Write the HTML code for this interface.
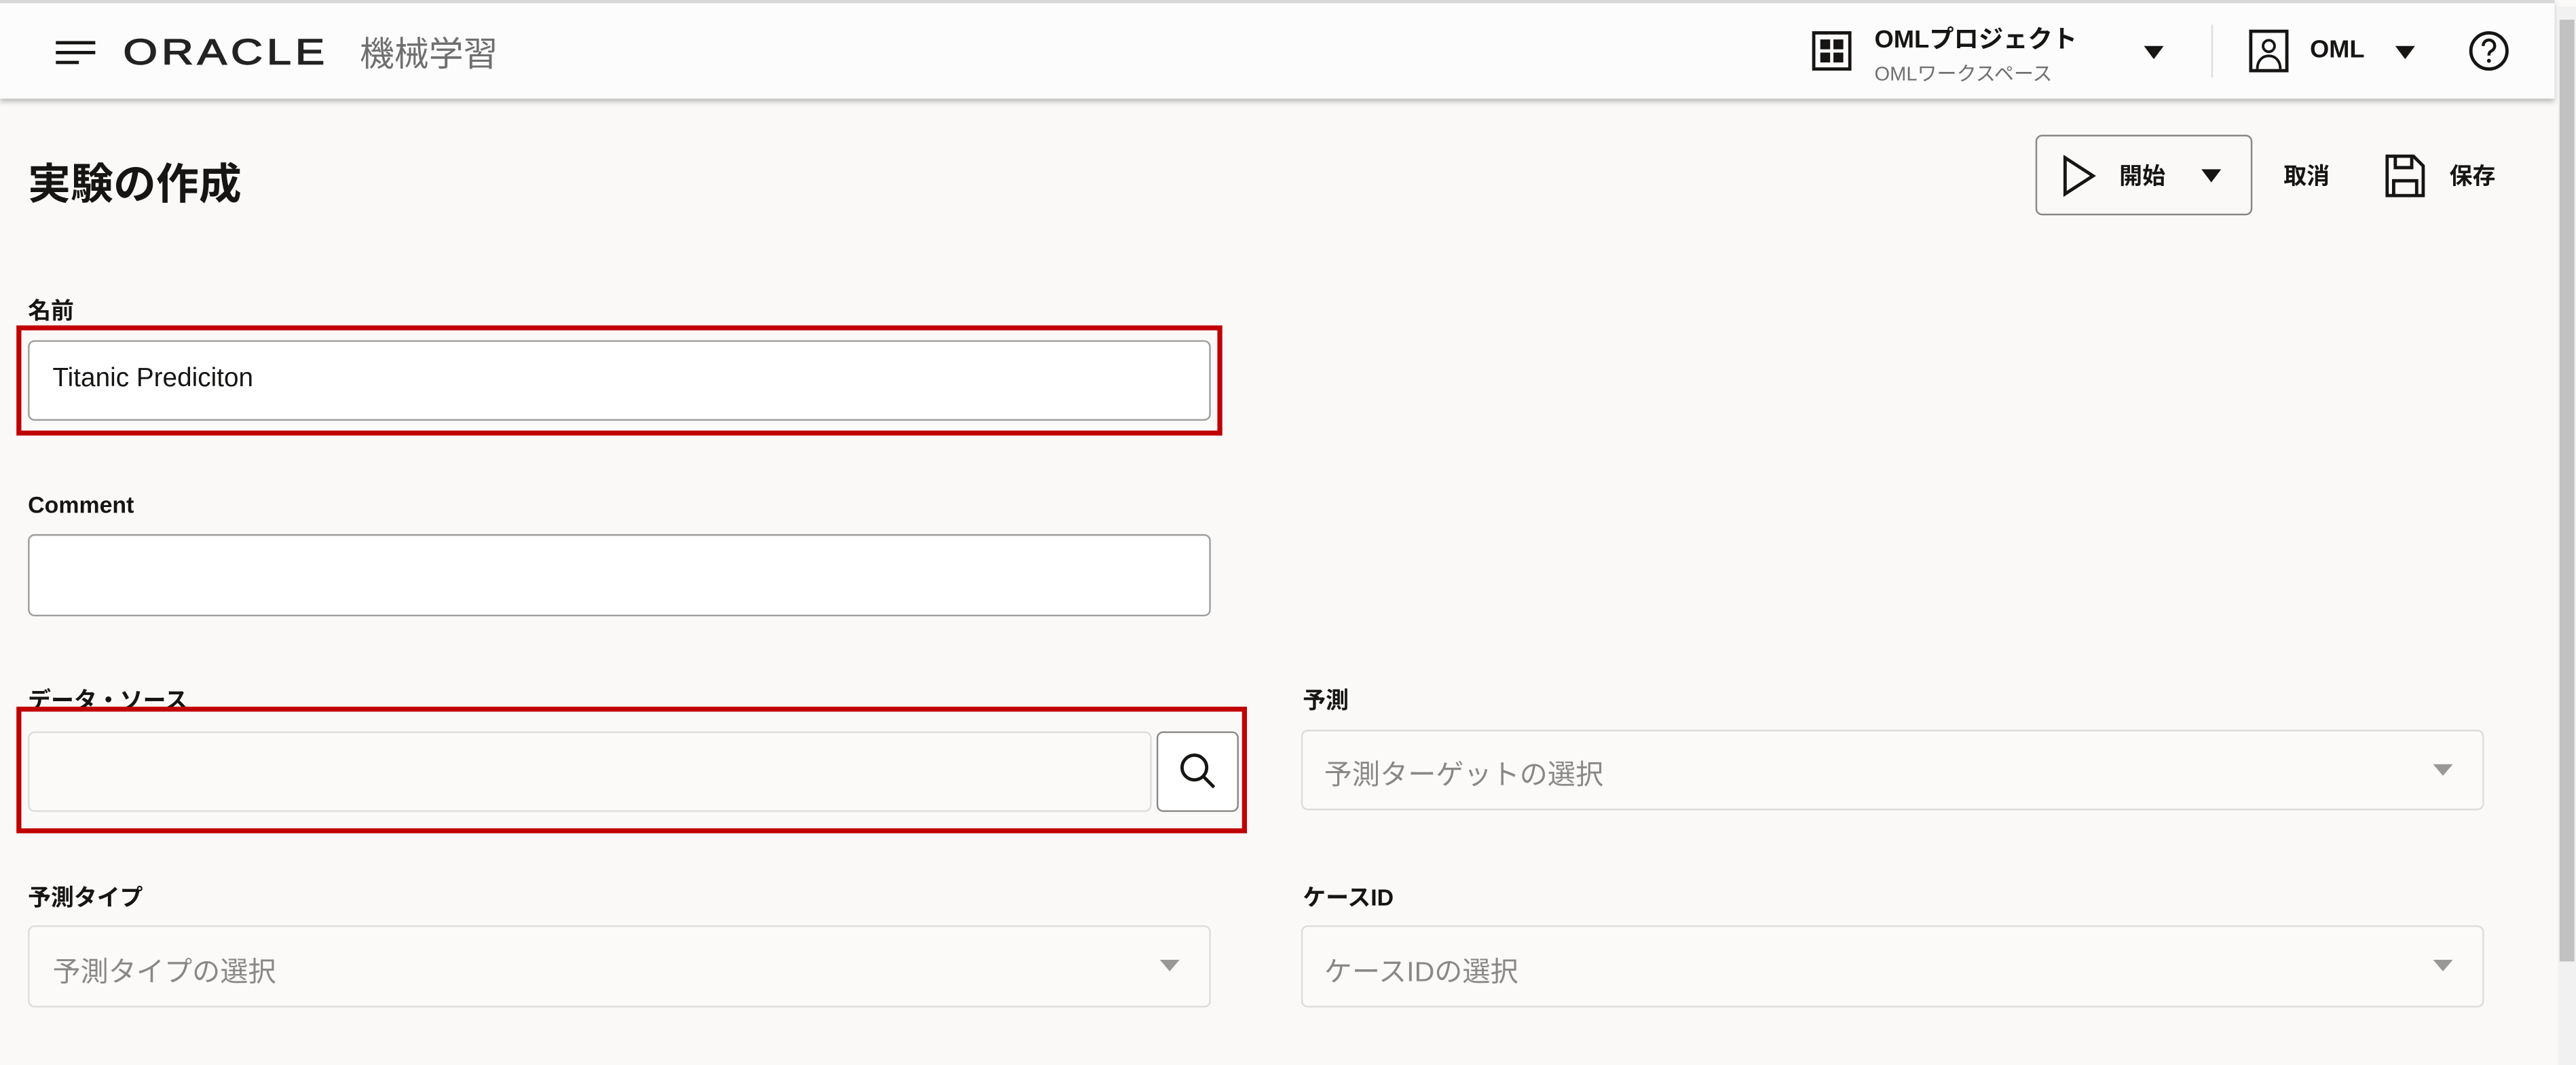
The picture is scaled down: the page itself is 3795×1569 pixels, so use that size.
<!DOCTYPE html>
<html><head><meta charset="utf-8"><style>
html,body{margin:0;padding:0;width:3795px;height:1569px;overflow:hidden;background:#faf9f8}
#w{position:absolute;left:0;top:0;width:1568px;height:648px;transform:scale(2.4203,2.4213);transform-origin:0 0;font-family:"Liberation Sans","Noto Sans CJK JP",sans-serif;color:#161513}
.a{position:absolute}
.hdr{left:0;top:0;width:1555px;height:60px;background:#fcfcfc;border-top:2px solid #d8d8d8;box-sizing:border-box;box-shadow:0 2px 3px rgba(0,0,0,.25)}
.lbl{font-size:14px;font-weight:bold}
.inp{background:#fff;border:1px solid #9e9e9e;border-radius:4px;box-sizing:border-box}
.dis{background:#fbfaf9;border:1px solid #dedcda;border-radius:4px;box-sizing:border-box}
.ph{font-size:17px;color:#8a8886}
.red{border:3px solid #c00000;box-sizing:border-box}
.car{width:0;height:0;border-left:6px solid transparent;border-right:6px solid transparent;border-top:8px solid #161513}
.gc{width:0;height:0;border-left:6px solid transparent;border-right:6px solid transparent;border-top:7px solid #9a9896}
</style></head><body><div id="w">
<div class="a hdr"></div>
<svg class="a" style="left:33px;top:24px" width="26" height="16"><path d="M1 2h24M1 8h24M1 14h14" stroke="#161513" stroke-width="2"/></svg>
<div class="a" style="left:75px;top:19px;font-size:22px;letter-spacing:2px;-webkit-text-stroke:0.6px #222;transform:scaleX(1.22);transform-origin:0 0;color:#222">ORACLE</div>
<div class="a" style="left:219px;top:17px;font-size:21px;color:#6f6f6f">機械学習</div>
<svg class="a" style="left:1103px;top:19px" width="24" height="24"><rect x="1" y="1" width="22" height="22" fill="none" stroke="#161513" stroke-width="2"/><rect x="5" y="5" width="6" height="6" fill="#161513"/><rect x="13" y="5" width="6" height="6" fill="#161513"/><rect x="5" y="13" width="6" height="6" fill="#161513"/><rect x="13" y="13" width="6" height="6" fill="#161513"/></svg>
<div class="a" style="left:1141px;top:13px;font-size:15px;font-weight:bold">OMLプロジェクト</div>
<div class="a" style="left:1141px;top:36px;font-size:12px;color:#6f6f6f">OMLワークスペース</div>
<div class="a car" style="left:1305px;top:28px"></div>
<div class="a" style="left:1346px;top:15px;width:1px;height:32px;background:#ddd"></div>
<svg class="a" style="left:1369px;top:18px" width="24" height="26"><rect x="1" y="1" width="22" height="24" fill="none" stroke="#161513" stroke-width="2"/><circle cx="12" cy="10" r="3.5" fill="none" stroke="#161513" stroke-width="1.6"/><path d="M5 24c0-5 3-8 7-8s7 3 7 8" fill="none" stroke="#161513" stroke-width="1.6"/></svg>
<div class="a" style="left:1406px;top:22px;font-size:15px;font-weight:bold">OML</div>
<div class="a car" style="left:1458px;top:28px"></div>
<svg class="a" style="left:1502px;top:18px" width="26" height="26"><circle cx="13" cy="13" r="11" fill="none" stroke="#161513" stroke-width="2"/><path d="M9.5 10a3.5 3.5 0 1 1 5 3c-1.2.7-1.5 1.3-1.5 2.8" fill="none" stroke="#161513" stroke-width="1.8"/><circle cx="13" cy="19" r="1.2" fill="#161513"/></svg>
<div class="a" style="left:1557px;top:4px;width:11px;height:644px;background:#f1f1f1"></div>
<div class="a" style="left:1558px;top:12px;width:9px;height:573px;background:#c1c1c1"></div>
<div class="a" style="left:17px;top:92px;font-size:26px;font-weight:bold">実験の作成</div>
<div class="a" style="left:1239px;top:82px;width:132px;height:49px;border:1px solid #8a8886;border-radius:4px;box-sizing:border-box"></div>
<svg class="a" style="left:1255px;top:94px" width="22" height="26"><path d="M2 2L19 13 2 24Z" fill="none" stroke="#161513" stroke-width="2"/></svg>
<div class="a" style="left:1290px;top:97px;font-size:14px;font-weight:bold">開始</div>
<div class="a car" style="left:1340px;top:103px"></div>
<div class="a" style="left:1390px;top:97px;font-size:14px;font-weight:bold">取消</div>
<svg class="a" style="left:1452px;top:94px" width="24" height="26"><path d="M1 1h16l6 6v18H1Z" fill="none" stroke="#161513" stroke-width="2"/><path d="M6 1v7h10V1M5 25v-9h14v9" fill="none" stroke="#161513" stroke-width="2"/></svg>
<div class="a" style="left:1491px;top:97px;font-size:14px;font-weight:bold">保存</div>
<div class="a lbl" style="left:17px;top:179px">名前</div>
<div class="a red" style="left:10px;top:198px;width:734px;height:67px"></div>
<div class="a inp" style="left:17px;top:207px;width:720px;height:49px"></div>
<div class="a" style="left:32px;top:222px;font-size:16px">Titanic Prediciton</div>
<div class="a lbl" style="left:17px;top:299px">Comment</div>
<div class="a inp" style="left:17px;top:325px;width:720px;height:50px"></div>
<div class="a lbl" style="left:17px;top:416px">データ・ソース</div>
<div class="a red" style="left:10px;top:430px;width:749px;height:77px"></div>
<div class="a dis" style="left:17px;top:445px;width:684px;height:49px"></div>
<div class="a inp" style="left:704px;top:445px;width:50px;height:49px;border-color:#8a8886"></div>
<svg class="a" style="left:716px;top:456px" width="26" height="26"><circle cx="11" cy="11" r="7.5" fill="none" stroke="#161513" stroke-width="2"/><path d="M16.5 16.5L23 23" stroke="#161513" stroke-width="2"/></svg>
<div class="a lbl" style="left:793px;top:416px">予測</div>
<div class="a dis" style="left:792px;top:444px;width:720px;height:49px"></div>
<div class="a ph" style="left:806px;top:457px">予測ターゲットの選択</div>
<div class="a gc" style="left:1481px;top:465px"></div>
<div class="a lbl" style="left:17px;top:536px">予測タイプ</div>
<div class="a dis" style="left:17px;top:563px;width:720px;height:50px"></div>
<div class="a ph" style="left:32px;top:577px">予測タイプの選択</div>
<div class="a gc" style="left:706px;top:584px"></div>
<div class="a lbl" style="left:793px;top:536px">ケースID</div>
<div class="a dis" style="left:792px;top:563px;width:720px;height:50px"></div>
<div class="a ph" style="left:806px;top:577px">ケースIDの選択</div>
<div class="a gc" style="left:1481px;top:584px"></div>
</div></body></html>
